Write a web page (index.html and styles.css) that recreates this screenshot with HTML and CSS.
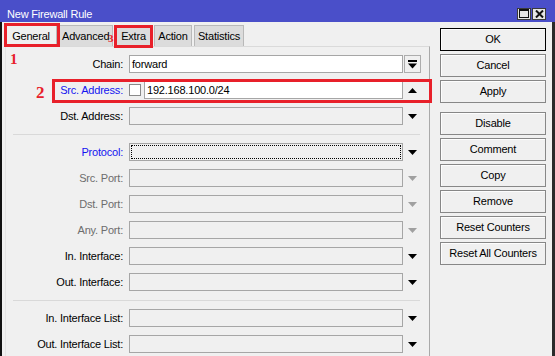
FILE: index.html
```html
<!DOCTYPE html>
<html lang="en">
<head>
    <meta charset="UTF-8">
    <title>New Firewall Rule</title>
    <link rel="stylesheet" href="styles.css">
</head>
<body>
<div class="window">
    <div class="titlebar">
        <span class="title">New Firewall Rule</span>
        <div class="winbtns">
            <span class="wbtn"><svg width="10" height="9" viewBox="0 0 10 9"><rect x="0.5" y="0.5" width="9" height="8" fill="none" stroke="#111"/><rect x="0" y="0" width="10" height="2" fill="#111"/></svg></span>
            <span class="wbtn"><svg width="9" height="8" viewBox="0 0 9 8"><path d="M1 0.5L8 7.5M8 0.5L1 7.5" stroke="#111" stroke-width="2"/></svg></span>
        </div>
    </div>

    <div class="frame">
        <div class="main">
            <div class="tabs">
                <div class="tab active t-general">General</div>
                <div class="tab t-advanced">Advanced</div>
                <div class="tab t-extra">Extra</div>
                <div class="tab t-action">Action</div>
                <div class="tab t-stats">Statistics</div>
            </div>

            <div class="panel">
                <div class="row">
                    <span class="lbl">Chain:</span>
                    <div class="field on">forward</div>
                    <div class="drop boxed"><svg width="9" height="9" viewBox="0 0 9 9"><rect x="0" y="0" width="9" height="2"/><path d="M0 3.5h9L4.5 8.5z"/></svg></div>
                </div>
                <div class="row">
                    <span class="lbl blue">Src. Address:</span>
                    <span class="check"></span>
                    <div class="field on short">192.168.100.0/24</div>
                    <div class="drop"><svg width="9" height="5" viewBox="0 0 9 5"><path d="M0 5h9L4.5 0z"/></svg></div>
                </div>
                <div class="row">
                    <span class="lbl">Dst. Address:</span>
                    <div class="field"></div>
                    <div class="drop"><svg width="9" height="5" viewBox="0 0 9 5"><path d="M0 0h9L4.5 5z"/></svg></div>
                </div>

                <div class="sep"></div>

                <div class="row">
                    <span class="lbl blue">Protocol:</span>
                    <div class="field focus"></div>
                    <div class="drop"><svg width="9" height="5" viewBox="0 0 9 5"><path d="M0 0h9L4.5 5z"/></svg></div>
                </div>
                <div class="row">
                    <span class="lbl grey">Src. Port:</span>
                    <div class="field"></div>
                    <div class="drop off"><svg width="9" height="5" viewBox="0 0 9 5"><path d="M0 0h9L4.5 5z"/></svg></div>
                </div>
                <div class="row">
                    <span class="lbl grey">Dst. Port:</span>
                    <div class="field"></div>
                    <div class="drop off"><svg width="9" height="5" viewBox="0 0 9 5"><path d="M0 0h9L4.5 5z"/></svg></div>
                </div>
                <div class="row">
                    <span class="lbl grey">Any. Port:</span>
                    <div class="field"></div>
                    <div class="drop off"><svg width="9" height="5" viewBox="0 0 9 5"><path d="M0 0h9L4.5 5z"/></svg></div>
                </div>
                <div class="row">
                    <span class="lbl">In. Interface:</span>
                    <div class="field"></div>
                    <div class="drop"><svg width="9" height="5" viewBox="0 0 9 5"><path d="M0 0h9L4.5 5z"/></svg></div>
                </div>
                <div class="row">
                    <span class="lbl">Out. Interface:</span>
                    <div class="field"></div>
                    <div class="drop"><svg width="9" height="5" viewBox="0 0 9 5"><path d="M0 0h9L4.5 5z"/></svg></div>
                </div>

                <div class="sep"></div>

                <div class="row">
                    <span class="lbl">In. Interface List:</span>
                    <div class="field"></div>
                    <div class="drop"><svg width="9" height="5" viewBox="0 0 9 5"><path d="M0 0h9L4.5 5z"/></svg></div>
                </div>
                <div class="row">
                    <span class="lbl">Out. Interface List:</span>
                    <div class="field"></div>
                    <div class="drop"><svg width="9" height="5" viewBox="0 0 9 5"><path d="M0 0h9L4.5 5z"/></svg></div>
                </div>
            </div>
        </div>

        <div class="side">
            <div class="btn default">OK</div>
            <div class="btn">Cancel</div>
            <div class="btn">Apply</div>
            <div class="btn gap">Disable</div>
            <div class="btn">Comment</div>
            <div class="btn">Copy</div>
            <div class="btn">Remove</div>
            <div class="btn">Reset Counters</div>
            <div class="btn">Reset All Counters</div>
        </div>
    </div>

    <!-- red annotations drawn over the screenshot -->
    <div class="mark mark-general"></div>
    <div class="mark mark-extra"></div>
    <div class="mark mark-src"></div>
    <span class="num num-1">1</span>
    <span class="num num-2">2</span>
    <span class="num num-3">3</span>
</div>
</body>
</html>
```

FILE: styles.css
```css
body {
    margin: 0;
    font-family: "Liberation Sans", Arial, sans-serif;
    font-size: 11px;
    letter-spacing: -0.2px;
    color: #000;
    background: #f0f0f0;
}
.window {
    position: relative;
    width: 555px;
    height: 356px;
    overflow: hidden;
    background: #f0f0f0;
}
.titlebar {
    height: 22px;
    box-sizing: border-box;
    padding: 5px 9px 0 7px;
    background: #4a4fc9;
    color: #fff;
    display: flex;
    align-items: center;
    justify-content: space-between;
}
.winbtns {
    display: flex;
    gap: 1px;
}
.wbtn {
    width: 14px;
    height: 12px;
    box-sizing: border-box;
    border: 1px solid #3a3a3a;
    background: #e6e6e6;
    display: flex;
    align-items: center;
    justify-content: center;
}
.frame {
    display: flex;
    height: 334px;
    border-left: 2px solid #111;
    border-right: 3px solid #2a2a2a;
}
.main {
    width: 428px;
    padding-top: 3px;
}
.tabs {
    display: flex;
    margin-left: 3px;
    height: 21px;
}
.tab {
    box-sizing: border-box;
    border: 1px solid #b9b9b9;
    border-bottom: none;
    background: #dcdcdc;
    line-height: 20px;
    text-align: center;
    white-space: nowrap;
}
.tab.active {
    background: #f0f0f0;
}
.t-general {
    width: 52px;
}
.t-advanced {
    width: 54px;
    margin-left: 2px;
    text-align: left;
    padding-left: 2px;
}
.t-extra {
    width: 35px;
    margin-left: 3px;
}
.t-action {
    width: 38px;
    margin-left: 3px;
}
.t-stats {
    width: 50px;
    margin-left: 2px;
}
.panel {
    margin-left: 3px;
    height: 310px;
    box-sizing: border-box;
    border-top: 1px solid #dadada;
    border-left: 1px solid #e4e4e4;
    border-right: 1px solid #a9a9a9;
    padding: 8px 8px 0 0;
    display: flex;
    flex-direction: column;
    gap: 8px;
}
.row {
    display: flex;
    align-items: center;
    height: 18px;
}
.lbl {
    width: 117px;
    margin-right: 6px;
    text-align: right;
    white-space: nowrap;
}
.blue {
    color: #1414f0;
}
.grey {
    color: #6d6d6d;
}
.field {
    width: 274px;
    height: 18px;
    box-sizing: border-box;
    border: 1px solid #a6a6a6;
    background: #f0f0f0;
    padding-left: 2px;
    line-height: 16px;
}
.field.on {
    background: #fff;
}
.field.short {
    width: 259px;
}
.field.focus {
    outline: 1px dotted #000;
    outline-offset: -3px;
}
.check {
    width: 12px;
    height: 12px;
    box-sizing: border-box;
    border: 1px solid #8a8a8a;
    background: #fff;
    margin-right: 3px;
}
.drop {
    width: 17px;
    height: 18px;
    margin-left: 1px;
    box-sizing: border-box;
    display: flex;
    align-items: center;
    justify-content: center;
    fill: #000;
}
.drop.boxed {
    border: 1px solid #adadad;
}
.drop.off {
    fill: #a0a0a0;
}
.sep {
    height: 1px;
    background: #d9d9d9;
    margin: 1px 1px 0 7px;
}
.side {
    flex: 1;
    padding: 6px 0 0 10px;
    display: flex;
    flex-direction: column;
    gap: 3px;
}
.btn {
    width: 106px;
    height: 23px;
    box-sizing: border-box;
    border: 1px solid #878787;
    background: #f0f0f0;
    box-shadow: inset 1px 1px 0 #fdfdfd;
    text-align: center;
    line-height: 21px;
}
.btn.default {
    border-color: #000;
}
.btn.gap {
    margin-top: 6px;
}
.mark {
    position: absolute;
    box-sizing: border-box;
    border: 3px solid #e8202a;
}
.mark-general {
    left: 4px;
    top: 23px;
    width: 56px;
    height: 24px;
}
.mark-extra {
    left: 114px;
    top: 25px;
    width: 39px;
    height: 23px;
}
.mark-src {
    left: 52px;
    top: 79px;
    width: 380px;
    height: 24px;
}
.num {
    position: absolute;
    color: #e8202a;
    font-family: "Liberation Serif", "Times New Roman", serif;
    font-weight: bold;
    line-height: 1;
}
.num-1 {
    left: 10px;
    top: 52px;
    font-size: 15px;
}
.num-2 {
    left: 36px;
    top: 84px;
    font-size: 17px;
}
.num-3 {
    left: 108px;
    top: 33px;
    font-size: 11px;
}
```
